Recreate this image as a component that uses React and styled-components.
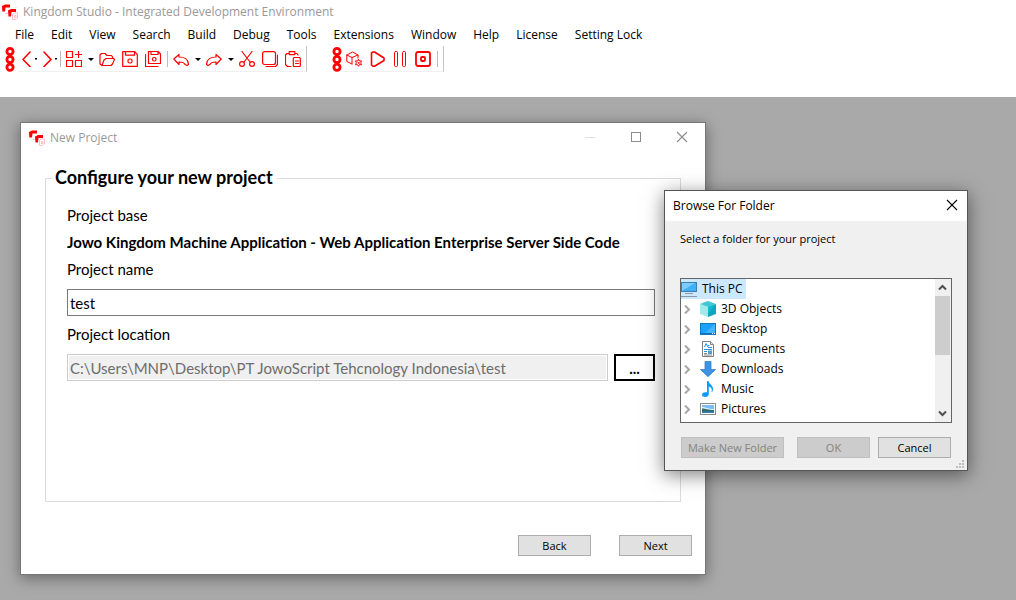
import React from "react";
import styled, { createGlobalStyle, css } from "styled-components";

const RED = "#ff0000";
const UI = '"Open Sans", "Noto Sans", sans-serif';
const FORM = 'Lato, "Open Sans", sans-serif';

const GlobalStyle = createGlobalStyle`
  * { box-sizing: border-box; }
  html, body, #root { height: 100%; }
  body {
    margin: 0;
    overflow: hidden;
    background: #ffffff;
    color: #000000;
    font: 12px/16px ${UI};
  }
  button, input { font: inherit; color: inherit; }
`;

const Shell = styled.div`
  display: flex;
  flex-direction: column;
  min-height: 100%;
`;

const AppTitle = styled.header`
  display: flex;
  align-items: center;
  gap: 5px;
  height: 24px;
  padding-left: 2px;
  color: #999999;
`;

const MenuBar = styled.nav`
  display: flex;
  align-items: center;
  gap: 17px;
  height: 22px;
  padding-left: 15px;
`;

const MenuButton = styled.button`
  padding: 0;
  border: 0;
  background: none;
  white-space: nowrap;
`;

const ToolRow = styled.div`
  display: flex;
  gap: 20px;
  height: 51px;
`;

const ToolStrip = styled.div`
  display: flex;
  height: 26px;
  padding-left: 5px;
`;

const StripBody = styled.div`
  display: flex;
  align-items: flex-start;
  height: 26px;
  margin-left: ${(p) => p.$start}px;
  padding: 2px ${(p) => p.$end}px 0 0;
  border-bottom: 1px solid #f0f0f0;
  border-right: 1px solid #c4c4c4;
`;

const ToolButton = styled.button`
  display: block;
  flex: none;
  height: 22px;
  padding: ${(p) => (p.$narrow ? "3px 0" : "3px 4px 3px 3px")};
  border: 0;
  background: none;
  svg { display: block; }
`;

const DropButton = styled.button`
  display: grid;
  place-items: center;
  width: ${(p) => (p.$narrow ? 4 : 10)}px;
  height: 22px;
  padding: 0;
  border: 0;
  background: none;
`;

const Separator = styled.span`
  width: 1px;
  height: 16px;
  margin: 3px 2px;
  background: #bdbdbd;
`;

const Desktop = styled.main`
  position: relative;
  flex: 1;
  background: #a9a9a9;
`;

const WindowFrame = styled.section`
  position: absolute;
  display: flex;
  flex-direction: column;
  border: 1px solid #777777;
  background: #ffffff;
`;

const ProjectWindow = styled(WindowFrame)`
  left: 20px;
  top: 25px;
  width: 686px;
  box-shadow: 0 3px 14px rgba(0, 0, 0, 0.4);
`;

const BrowseWindow = styled(WindowFrame)`
  left: 664px;
  top: 93px;
  width: 304px;
  border-color: #555555;
  background: #f0f0f0;
  box-shadow: 0 4px 18px rgba(0, 0, 0, 0.5);
`;

const TitleBar = styled.div`
  display: flex;
  align-items: center;
  gap: 5px;
  height: 30px;
  padding-left: 8px;
  background: #ffffff;
  color: ${(p) => (p.$inactive ? "#999999" : "#000000")};
`;

const TitleText = styled.span`
  flex: 1;
`;

const CaptionButtons = styled.div`
  display: flex;
  align-self: flex-start;
`;

const CaptionButton = styled.button`
  display: grid;
  place-items: center;
  width: ${(p) => (p.$small ? 30 : 46)}px;
  height: 28px;
  padding: 0;
  border: 0;
  background: none;
`;

const ProjectForm = styled.form`
  display: flex;
  flex-direction: column;
  gap: 33px;
  padding: 14px 13px 18px 24px;
`;

const Group = styled.fieldset`
  height: 335px;
  margin: 0 11px 0 0;
  padding: 16px 25px 0 21px;
  border: 1px solid #dcdcdc;
  font: 15px/20px ${FORM};
`;

const GroupTitle = styled.legend`
  margin-left: -15px;
  padding: 0 4px 2px 3px;
  font-size: 18px;
  font-weight: 700;
  line-height: 20px;
`;

const FieldStack = styled.div`
  display: flex;
  flex-direction: column;
`;

const FieldLabel = styled.label`
  margin: ${(p) => (p.$spaced ? "8px 0 10px" : "0 0 10px")};
`;

const BaseLabel = styled.span`
  margin-bottom: 7px;
`;

const BaseValue = styled.strong`
  margin-bottom: 7px;
  white-space: nowrap;
`;

const TextBox = styled.input`
  flex: 1;
  min-width: 0;
  height: 27px;
  padding: 0 2px;
  border: 1px solid #7a7a7a;
  border-radius: 0;
  background: #ffffff;
  outline: none;
  ${(p) =>
    p.disabled &&
    css`
      border-color: #cccccc;
      background: #f0f0f0;
      box-shadow: inset 0 0 0 1px #ffffff;
      color: #6d6d6d;
    `}
`;

const FieldRow = styled.div`
  display: flex;
  gap: 6px;
`;

const BrowseButton = styled.button`
  width: 41px;
  height: 27px;
  padding: 0;
  border: 2px solid #000000;
  background: #ffffff;
  font-weight: 700;
`;

const Actions = styled.div`
  display: flex;
  justify-content: flex-end;
  gap: ${(p) => p.$gap}px;
`;

const PushButton = styled.button`
  flex: none;
  width: ${(p) => (p.$wide ? 103 : 73)}px;
  height: 21px;
  padding: 0;
  border: 1px solid #adadad;
  background: #e1e1e1;
  font-size: 11px;
  line-height: 16px;
  white-space: nowrap;
  &:disabled {
    border-color: #bfbfbf;
    background: #cccccc;
    color: #838383;
  }
`;

const BrowseBody = styled.div`
  display: flex;
  flex-direction: column;
  padding: 10px 15px 0;
`;

const Prompt = styled.p`
  height: 47px;
  margin: 0;
  font-size: 11px;
`;

const TreeBox = styled.div`
  display: flex;
  height: 145px;
  border: 1px solid #646464;
  background: #ffffff;
`;

const Tree = styled.ul`
  flex: 1;
  margin: 0;
  padding: 0;
  list-style: none;
`;

const TreeItem = styled.li`
  display: flex;
  align-items: center;
  width: max-content;
  height: 20px;
  padding-right: 3px;
  background: ${(p) => (p.$selected ? "#cce8ff" : "transparent")};
`;

const Expander = styled.button`
  display: grid;
  place-items: center;
  width: 13px;
  height: 20px;
  margin-right: 6px;
  padding: 0;
  border: 0;
  background: none;
`;

const ItemName = styled.span`
  margin-left: 5px;
`;

const ScrollBar = styled.div`
  display: flex;
  flex-direction: column;
  width: 16px;
  background: #f0f0f0;
`;

const ScrollButton = styled.button`
  display: grid;
  place-items: center;
  width: 15px;
  height: 17px;
  padding: 0;
  border: 0;
  background: none;
`;

const ScrollTrack = styled.div`
  flex: 1;
`;

const ScrollThumb = styled.div`
  width: 15px;
  height: 59px;
  background: #cdcdcd;
`;

const BrowseActions = styled.div`
  display: flex;
  justify-content: space-between;
  padding: 14px 1px 0;
`;

const GripRow = styled.div`
  display: flex;
  justify-content: flex-end;
  align-items: flex-end;
  height: 12px;
  padding: 0 2px 1px;
`;

function Logo() {
  return (
    <svg width="16" height="16" viewBox="0 0 16 16" aria-hidden="true">
      <path d="M0 2l3-1.500h5v3H3.500L3 7.500H.3z" fill={RED} />
      <path d="M6 6.500l3-1.500h5v3H9.500L9 12.500H6.500z" fill={RED} />
      <path d="M3.500 9.500h2M13.500 3.500h1M10.500 15.500V10.500l1.500-1.500h3.500v5l-1.500 1.500zM12.500 11.500h1.500v2h-1.500z" fill="none" stroke="#ffc0c0" />
    </svg>
  );
}

function RedIcon({ children, width = 1.2 }) {
  return (
    <svg width="16" height="16" viewBox="0 0 16 16" fill="none" stroke={RED} strokeWidth={width} strokeLinejoin="round" strokeLinecap="round" aria-hidden="true">
      {children}
    </svg>
  );
}

function Grip() {
  return (
    <svg width="10" height="26" viewBox="0 0 10 26" fill="none" stroke={RED} strokeWidth="2.800" aria-hidden="true">
      <circle cx="5" cy="5.500" r="3.100" />
      <circle cx="5" cy="13.500" r="3.100" />
      <circle cx="5" cy="21.300" r="3.100" />
    </svg>
  );
}

function Drop({ narrow, label }) {
  return (
    <DropButton type="button" $narrow={narrow} aria-label={label}>
      {narrow ? (
        <svg width="2" height="2" viewBox="0 0 2 2"><path d="M0 0h2v1H1.500v1H.5V1H0z" /></svg>
      ) : (
        <svg width="6" height="3" viewBox="0 0 6 3"><path d="M0 0h6L3 3z" /></svg>
      )}
    </DropButton>
  );
}

function Tool({ label, children, narrow, width }) {
  return (
    <ToolButton type="button" aria-label={label} $narrow={narrow}>
      <RedIcon width={width}>{children}</RedIcon>
    </ToolButton>
  );
}

const floppy = "M.7.7h12L15.300 3.500V15.300H.7zM3.500.7v3.500h9V.7";

function MainStrip() {
  return (
    <ToolStrip>
      <Grip />
      <StripBody $start={3} $end={1}>
        <Tool label="Navigate back" narrow width={1.600}><path d="M12 1L5 8.500l7 7" /></Tool>
        <Drop narrow label="Back history" />
        <Tool label="Navigate forward" narrow width={1.600}><path d="M6 1l7 7.500-7 7" /></Tool>
        <Drop narrow label="Forward history" />
        <Separator />
        <Tool label="New">
          <path d="M.5.500h6v6h-6zM.5 9.500h6v6h-6zM9.500 9.500h6v6h-6zM12.500.500v6M9.500 3.500h6" />
        </Tool>
        <Drop label="New options" />
        <Tool label="Open"><path d="M3 14.500L1 13V4L2.500 2.500H6l2 2h4.500l1 1.500V7M3 14.500L5 9l2-1.500h7.500L15.500 8.500 13.500 13l-1.500 1.500z" /></Tool>
        <Tool label="Save"><path d={floppy} /><rect x="6" y="8" width="4" height="4" rx="1.500" /></Tool>
        <Tool label="Save all">
          <path d="M3.500.5h9.500l2.500 2.500v9.500H3.500zM6 .5v3h7V.5M.5 3.500v12H13" />
          <rect x="7.500" y="6.500" width="3.500" height="3.500" rx="1.500" />
        </Tool>
        <Separator />
        <Tool label="Undo"><path d="M.8 8L6 3.500V6c6 0 9 1.700 9.500 7.500l-1.500 1-2-1c-.5-1.700-2.200-2.500-6-2.500v2.500z" /></Tool>
        <Drop label="Undo history" />
        <Tool label="Redo"><path d="M15.200 8L10 3.500V6C4 6 1 7.700.5 13.500l1.500 1 2-1c.5-1.700 2.200-2.500 6-2.500v2.500z" /></Tool>
        <Drop label="Redo history" />
        <Tool label="Cut">
          <path d="M3 .5L11 11M13 .5L5 11" />
          <circle cx="3" cy="13" r="2.400" />
          <circle cx="13" cy="13" r="2.400" />
        </Tool>
        <Tool label="Copy"><rect x=".6" y=".6" width="12.900" height="12.900" rx="2" /><path d="M15.500 4v9.500l-2 2H4" /></Tool>
        <Tool label="Paste">
          <path d="M6 15.500H2.500L.5 13.500V4L2 2.500h2M10 2.500h2L13 4M4.200.6h5.600v3H4.200z" />
          <rect x="8.300" y="6.500" width="7" height="9" rx="1" />
          <path d="M10.500 10h3M10.500 12.500h3" strokeWidth="1" />
        </Tool>
      </StripBody>
    </ToolStrip>
  );
}

function RunStrip() {
  return (
    <ToolStrip>
      <Grip />
      <StripBody $start={1} $end={3}>
        <Tool label="Build" width={1}>
          <path d="M6 13L.8 10.500V4L6.500 1 12 4v3M.8 4L6 6.500 12 4M6 6.500V13" />
          <path d="M12.500 8.500l1 1.500 2-.2-.8 2 .8 2-2-.2-1 1.700-1-1.700-2 .2.800-2-.8-2 2 .2z" />
          <circle cx="12.500" cy="11.900" r=".5" />
        </Tool>
        <Tool label="Run" width={1.600}><path d="M2.500 2V14l1.500 1.200h1.500L15 9.500V7L5.500 1H4z" /></Tool>
        <Tool label="Pause" width={1}><rect x="2.500" y=".5" width="3" height="15" rx="1" /><rect x="10.500" y=".5" width="3" height="15" rx="1" /></Tool>
        <Tool label="Stop" width={1.800}><rect x="1" y="1" width="14" height="14" rx="2" /><rect x="6" y="6" width="4" height="4" rx="1" /></Tool>
        <Separator />
      </StripBody>
    </ToolStrip>
  );
}

function CloseIcon({ color }) {
  return (
    <svg width="12" height="12" viewBox="0 0 12 12" stroke={color} strokeWidth="1.100"><path d="M1 1l10 10M11 1L1 11" /></svg>
  );
}

function ThisPcIcon() {
  return (
    <svg width="16" height="16" viewBox="0 0 16 16">
      <rect x=".5" y="1.500" width="15" height="9" fill="#3fb0f7" stroke="#3c7fb0" />
      <path d="M1 2h13L1 10z" fill="#7accfb" />
      <path d="M4 12.500h8M0 15.500h16" stroke="#8a9aa5" />
    </svg>
  );
}

const treeIcons = {
  objects: (
    <>
      <path d="M0 3l8-3v13l-8-2z" fill="#b5ecee" />
      <path d="M0 3l8-3 8 3-8 3z" fill="#47c5d3" />
      <path d="M8 6l8-3v10l-8 3z" fill="#12a5bd" />
      <path d="M0 3l8 3v10l-8-3z" fill="#a5e8ea" />
      <path d="M8 6l7-2.500L8 13z" fill="#0ebbd4" />
    </>
  ),
  desktop: (
    <>
      <rect x=".5" y="2.500" width="15" height="11" fill="#1ba1ff" stroke="#1478bd" />
      <path d="M5 12L15 3v9z" fill="#45b4ff" />
      <path d="M1 12.500h14" stroke="#0870b8" />
      <path d="M12 12.500h1M14 12.500h1" stroke="#fff" />
    </>
  ),
  documents: (
    <>
      <path d="M2.500.5h8l3 3v12h-11z" fill="#fff" stroke="#7d7d7d" />
      <path d="M10.500.5v3h3" fill="#ddd" stroke="#888" />
      <path d="M6 2.500L4.500 6M6 2.500L8 6M8 4.500h1.500M8 6.500h4M4 8.500h8M4 10.500h3" stroke="#2196e8" />
      <path d="M4 12.500h3M4 14h8" stroke="#888" />
      <path d="M8 9.500h4v3.500H8z" fill="#4f9fd0" />
    </>
  ),
  downloads: <path d="M5 0.500h6V8.500h4.500L8 15.700.5 8.500H5z" fill="#3d94e6" stroke="#2878c4" strokeWidth=".7" />,
  music: <path d="M7 0h1.500c0 3 5 4 4.500 8.500C12.800 10.500 12 11 11.500 11c1-3-.5-5-2.700-5.500V13c0 1.700-1.500 3-3.800 3C3.300 16 2 15 2 13.700 2 12 4 10.700 7 11.300z" fill="#0a9bfa" />,
  pictures: (
    <>
      <rect x=".5" y="2.500" width="15" height="11" fill="#fff" stroke="#8a8a8a" />
      <rect x="2" y="4" width="12" height="8" fill="#7dbdf5" />
      <path d="M2 6c4 0 5 2 12 2v1H2z" fill="#d9efff" />
      <path d="M2 7.500c4 0 5 1.500 12 1.500v3H2z" fill="#2f6c66" />
      <path d="M2 10.500h12V12H2z" fill="#3480b8" />
    </>
  ),
};

const folders = [
  ["3D Objects", "objects"],
  ["Desktop", "desktop"],
  ["Documents", "documents"],
  ["Downloads", "downloads"],
  ["Music", "music"],
  ["Pictures", "pictures"],
];

const menus = ["File", "Edit", "View", "Search", "Build", "Debug", "Tools", "Extensions", "Window", "Help", "License", "Setting Lock"];

function ScrollArrow({ down }) {
  return (
    <svg width="9" height="7" viewBox="0 0 9 7" fill="none" stroke="#505050" strokeWidth="2">
      <path d={down ? "M1 1.500l3.500 3.500L8 1.500" : "M1 5.500L4.500 2 8 5.500"} />
    </svg>
  );
}

function NewProject() {
  return (
    <ProjectWindow aria-label="New Project">
      <TitleBar $inactive>
        <Logo />
        <TitleText>New Project</TitleText>
        <CaptionButtons>
          <CaptionButton type="button" aria-label="Minimize">
            <svg width="10" height="1"><path d="M0 .5h10" stroke="#dedede" /></svg>
          </CaptionButton>
          <CaptionButton type="button" aria-label="Maximize">
            <svg width="10" height="10"><rect x=".5" y=".5" width="9" height="9" fill="none" stroke="#8c8c8c" /></svg>
          </CaptionButton>
          <CaptionButton type="button" aria-label="Close"><CloseIcon color="#8c8c8c" /></CaptionButton>
        </CaptionButtons>
      </TitleBar>
      <ProjectForm onSubmit={(e) => e.preventDefault()}>
        <Group>
          <GroupTitle>Configure your new project</GroupTitle>
          <FieldStack>
            <BaseLabel>Project base</BaseLabel>
            <BaseValue>Jowo Kingdom Machine Application - Web Application Enterprise Server Side Code</BaseValue>
            <FieldLabel htmlFor="project-name">Project name</FieldLabel>
            <FieldRow><TextBox id="project-name" defaultValue="test" /></FieldRow>
            <FieldLabel $spaced htmlFor="project-location">Project location</FieldLabel>
            <FieldRow>
              <TextBox id="project-location" disabled defaultValue="C:\Users\MNP\Desktop\PT JowoScript Tehcnology Indonesia\test" />
              <BrowseButton type="button">...</BrowseButton>
            </FieldRow>
          </FieldStack>
        </Group>
        <Actions $gap={28}>
          <PushButton type="button">Back</PushButton>
          <PushButton type="submit">Next</PushButton>
        </Actions>
      </ProjectForm>
    </ProjectWindow>
  );
}

function BrowseForFolder() {
  return (
    <BrowseWindow role="dialog" aria-label="Browse For Folder">
      <TitleBar>
        <TitleText>Browse For Folder</TitleText>
        <CaptionButtons>
          <CaptionButton type="button" $small aria-label="Close"><CloseIcon color="#000000" /></CaptionButton>
        </CaptionButtons>
      </TitleBar>
      <BrowseBody>
        <Prompt>Select a folder for your project</Prompt>
        <TreeBox>
          <Tree>
            <TreeItem $selected><ThisPcIcon /><ItemName>This PC</ItemName></TreeItem>
            {folders.map(([name, icon]) => (
              <TreeItem key={name}>
                <Expander type="button" aria-label={`Expand ${name}`}>
                  <svg width="7" height="9" viewBox="0 0 7 9" fill="none" stroke="#a6a6a6" strokeWidth="2"><path d="M1 .5l4 4-4 4" /></svg>
                </Expander>
                <svg width="16" height="16" viewBox="0 0 16 16" aria-hidden="true">{treeIcons[icon]}</svg>
                <ItemName>{name}</ItemName>
              </TreeItem>
            ))}
          </Tree>
          <ScrollBar>
            <ScrollButton type="button" aria-label="Scroll up"><ScrollArrow /></ScrollButton>
            <ScrollTrack><ScrollThumb /></ScrollTrack>
            <ScrollButton type="button" aria-label="Scroll down"><ScrollArrow down /></ScrollButton>
          </ScrollBar>
        </TreeBox>
        <BrowseActions>
          <PushButton type="button" $wide disabled>Make New Folder</PushButton>
          <Actions $gap={8}>
            <PushButton type="button" disabled>OK</PushButton>
            <PushButton type="button">Cancel</PushButton>
          </Actions>
        </BrowseActions>
      </BrowseBody>
      <GripRow>
        <svg width="9" height="9" viewBox="0 0 9 9" fill="#bfbfbf">
          <path d="M6 0h2v2H6zM3 3h2v2H3zM6 3h2v2H6zM0 6h2v2H0zM3 6h2v2H3zM6 6h2v2H6z" />
        </svg>
      </GripRow>
    </BrowseWindow>
  );
}

export default function App() {
  return (
    <>
      <GlobalStyle />
      <Shell>
        <AppTitle>
          <Logo />
          <span>Kingdom Studio - Integrated Development Environment</span>
        </AppTitle>
        <MenuBar aria-label="Main menu">
          {menus.map((m) => <MenuButton type="button" key={m}>{m}</MenuButton>)}
        </MenuBar>
        <ToolRow>
          <MainStrip />
          <RunStrip />
        </ToolRow>
        <Desktop>
          <NewProject />
          <BrowseForFolder />
        </Desktop>
      </Shell>
    </>
  );
}
